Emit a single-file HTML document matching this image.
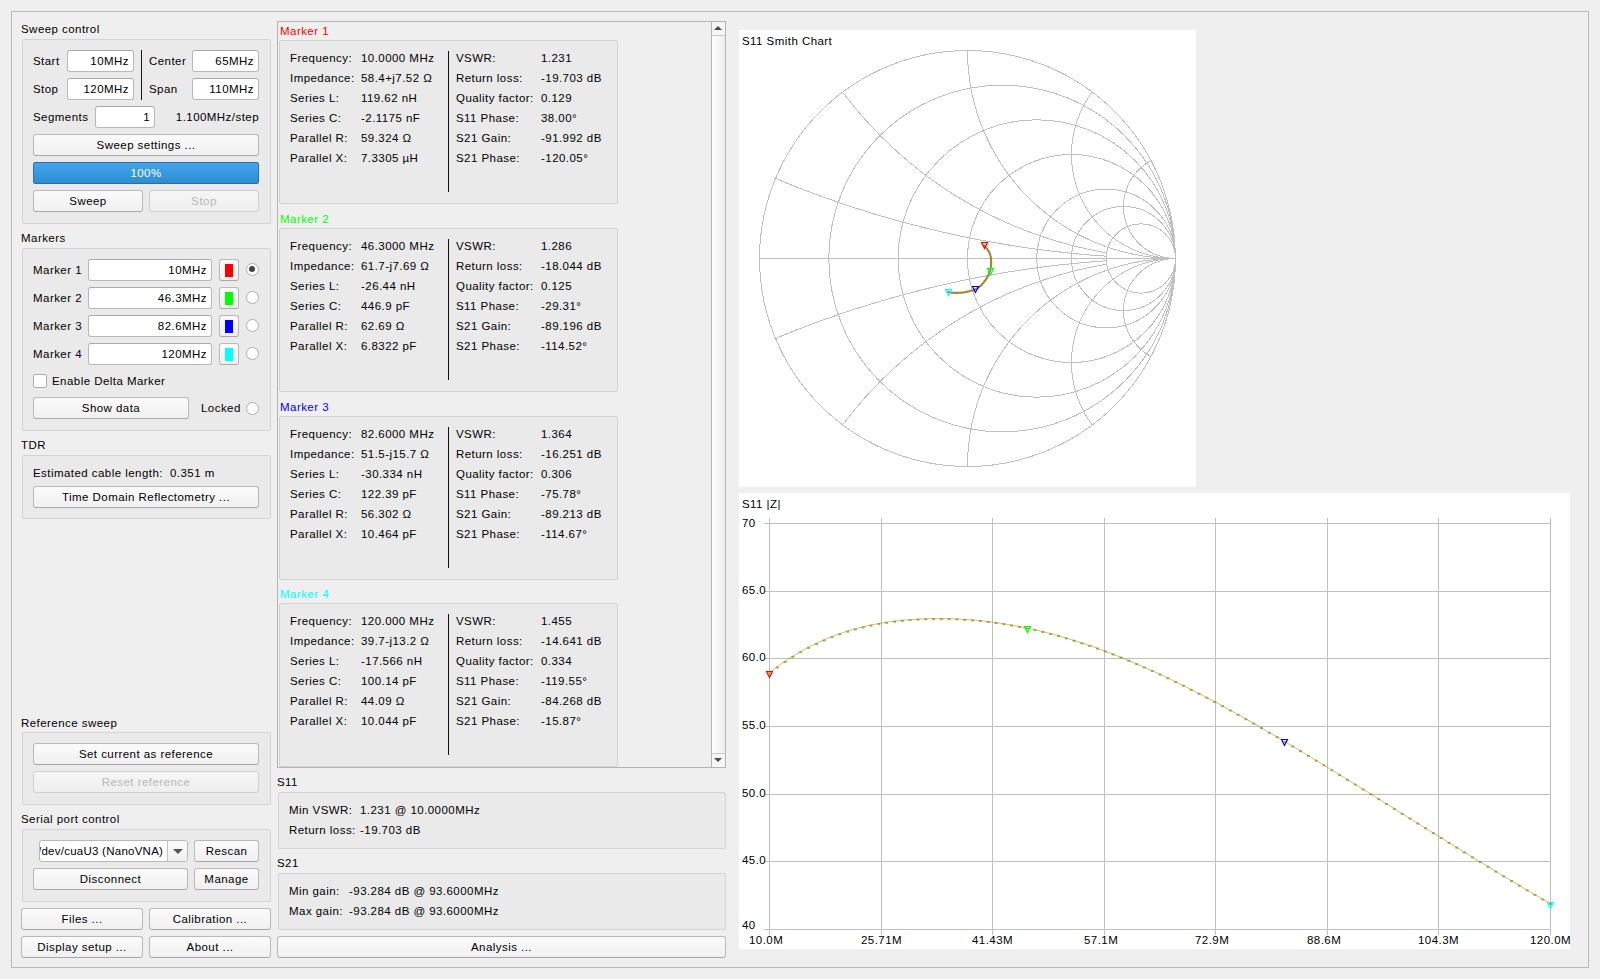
<!DOCTYPE html>
<html><head><meta charset="utf-8"><title>NanoVNA-Saver</title>
<style>
html,body{margin:0;padding:0;}
body{width:1600px;height:979px;overflow:hidden;background:#efefef;position:relative;font-family:"Liberation Sans",sans-serif;font-size:11.5px;color:#000;letter-spacing:0.45px;}
div{position:absolute;box-sizing:border-box;}
.t{white-space:pre;line-height:14px;}
.frame{border:1px solid #b9b9b9;}
.gb{border:1px solid #d3d3d3;border-radius:2px;background:#eaeaea;}
.le{background:#fff;border:1px solid #b8b8b8;border-top-color:#a9a9a9;border-radius:3px;text-align:right;padding-right:4px;white-space:nowrap;}
.btn{border:1px solid #b9b9b9;border-bottom-color:#a8a8a8;border-radius:3px;background:linear-gradient(#fbfbfb,#f0f0f0);text-align:center;white-space:nowrap;}
.btn.dis{color:#b8b8b8;border-color:#cfcfcf;background:linear-gradient(#f6f6f6,#eeeeee);}
.rad{width:13px;height:13px;border-radius:50%;border:1px solid #adadad;background:#fff;}
.dot{width:6px;height:6px;border-radius:50%;background:#434343;}
.mb{border:1px solid #d3d3d3;border-radius:2px;background:#eaeaea;}
svg{position:absolute;left:0;top:0;}
</style></head><body>

<div class="frame" style="left:11px;top:11px;width:1578px;height:957px"></div>
<div class="t " style="left:21px;top:22px;">Sweep control</div>
<div class="gb" style="left:22px;top:39px;width:249px;height:185px"></div>
<div class="t " style="left:33px;top:54px;">Start</div>
<div class="t " style="left:33px;top:82px;">Stop</div>
<div class="t " style="left:149px;top:54px;">Center</div>
<div class="t " style="left:149px;top:82px;">Span</div>
<div class="t " style="left:33px;top:110px;">Segments</div>
<div class="le" style="left:67px;top:50px;width:67px;height:22px;line-height:20px">10MHz</div>
<div class="le" style="left:67px;top:78px;width:67px;height:22px;line-height:20px">120MHz</div>
<div class="le" style="left:192px;top:50px;width:67px;height:22px;line-height:20px">65MHz</div>
<div class="le" style="left:192px;top:78px;width:67px;height:22px;line-height:20px">110MHz</div>
<div class="le" style="left:95px;top:106px;width:60px;height:22px;line-height:20px">1</div>
<div class="t " style="right:1341px;top:110px;">1.100MHz/step</div>
<div style="left:141px;top:50px;width:1px;height:50px;background:#1a1a1a"></div>
<div class="btn" style="left:33px;top:134px;width:226px;height:22px;line-height:20px">Sweep settings ...</div>
<div style="left:33px;top:162px;width:226px;height:22px;border:1px solid #2a6fa8;border-radius:2px;background:linear-gradient(#43a6ea,#2f8cd2);color:#fff;text-align:center;line-height:20px">100%</div>
<div class="btn" style="left:33px;top:190px;width:110px;height:22px;line-height:20px">Sweep</div>
<div class="btn dis" style="left:149px;top:190px;width:110px;height:22px;line-height:20px">Stop</div>
<div class="t " style="left:21px;top:231px;">Markers</div>
<div class="gb" style="left:22px;top:248px;width:249px;height:183px"></div>
<div class="t " style="left:33px;top:263px;">Marker 1</div>
<div class="le" style="left:88px;top:259px;width:124px;height:22px;line-height:20px">10MHz</div>
<div class="btn" style="left:219px;top:259px;width:20px;height:22px"></div>
<div style="left:225px;top:264px;width:8px;height:13px;background:#ff0000"></div>
<div class="rad" style="left:245.5px;top:262.5px"></div>
<div class="dot" style="left:249px;top:266px"></div>
<div class="t " style="left:33px;top:291px;">Marker 2</div>
<div class="le" style="left:88px;top:287px;width:124px;height:22px;line-height:20px">46.3MHz</div>
<div class="btn" style="left:219px;top:287px;width:20px;height:22px"></div>
<div style="left:225px;top:292px;width:8px;height:13px;background:#00ff00"></div>
<div class="rad" style="left:245.5px;top:290.5px"></div>
<div class="t " style="left:33px;top:319px;">Marker 3</div>
<div class="le" style="left:88px;top:315px;width:124px;height:22px;line-height:20px">82.6MHz</div>
<div class="btn" style="left:219px;top:315px;width:20px;height:22px"></div>
<div style="left:225px;top:320px;width:8px;height:13px;background:#0000ff"></div>
<div class="rad" style="left:245.5px;top:318.5px"></div>
<div class="t " style="left:33px;top:347px;">Marker 4</div>
<div class="le" style="left:88px;top:343px;width:124px;height:22px;line-height:20px">120MHz</div>
<div class="btn" style="left:219px;top:343px;width:20px;height:22px"></div>
<div style="left:225px;top:348px;width:8px;height:13px;background:#00ffff"></div>
<div class="rad" style="left:245.5px;top:346.5px"></div>
<div style="left:33px;top:374px;width:14px;height:14px;border:1px solid #adadad;border-radius:2px;background:#fff"></div>
<div class="t " style="left:52px;top:374px;">Enable Delta Marker</div>
<div class="btn" style="left:33px;top:397px;width:156px;height:22px;line-height:20px">Show data</div>
<div class="t " style="left:201px;top:401px;">Locked</div>
<div class="rad" style="left:245.5px;top:401.5px"></div>
<div class="t " style="left:21px;top:438px;">TDR</div>
<div class="gb" style="left:22px;top:455px;width:249px;height:64px"></div>
<div class="t " style="left:33px;top:466px;">Estimated cable length:</div>
<div class="t " style="left:170px;top:466px;">0.351 m</div>
<div class="btn" style="left:33px;top:486px;width:226px;height:22px;line-height:20px">Time Domain Reflectometry ...</div>
<div class="t " style="left:21px;top:716px;">Reference sweep</div>
<div class="gb" style="left:22px;top:732px;width:249px;height:73px"></div>
<div class="btn" style="left:33px;top:743px;width:226px;height:22px;line-height:20px">Set current as reference</div>
<div class="btn dis" style="left:33px;top:771px;width:226px;height:22px;line-height:20px">Reset reference</div>
<div class="t " style="left:21px;top:812px;">Serial port control</div>
<div class="gb" style="left:22px;top:829px;width:249px;height:73px"></div>
<div style="left:39px;top:840px;width:149px;height:22px;border:1px solid #b9b9b9;border-radius:3px;background:#fff;overflow:hidden"><div class="t" style="left:-2px;top:3px;letter-spacing:0.25px">/dev/cuaU3 (NanoVNA)</div><div style="left:127px;top:0;width:21px;height:20px;border-left:1px solid #c4c4c4;background:linear-gradient(#fbfbfb,#f0f0f0)"></div><div style="left:133px;top:8px;width:0;height:0;border-left:5px solid transparent;border-right:5px solid transparent;border-top:5px solid #555"></div></div>
<div class="btn" style="left:194px;top:840px;width:65px;height:22px;line-height:20px">Rescan</div>
<div class="btn" style="left:33px;top:868px;width:155px;height:22px;line-height:20px">Disconnect</div>
<div class="btn" style="left:194px;top:868px;width:65px;height:22px;line-height:20px">Manage</div>
<div class="btn" style="left:21px;top:908px;width:122px;height:22px;line-height:20px">Files ...</div>
<div class="btn" style="left:149px;top:908px;width:122px;height:22px;line-height:20px">Calibration ...</div>
<div class="btn" style="left:21px;top:936px;width:122px;height:22px;line-height:20px">Display setup ...</div>
<div class="btn" style="left:149px;top:936px;width:122px;height:22px;line-height:20px">About ...</div>
<div style="left:277px;top:21px;width:449px;height:747px;border:1px solid #b4b4b4;overflow:hidden">
<div class="t" style="left:2px;top:2px;color:#ff0000;">Marker 1</div>
<div class="mb" style="left:1px;top:18px;width:339px;height:164px"></div>
<div class="t" style="left:12px;top:29px;">Frequency:</div>
<div class="t" style="left:83px;top:29px;">10.0000 MHz</div>
<div class="t" style="left:178px;top:29px;">VSWR:</div>
<div class="t" style="left:263px;top:29px;">1.231</div>
<div class="t" style="left:12px;top:49px;">Impedance:</div>
<div class="t" style="left:83px;top:49px;">58.4+j7.52 Ω</div>
<div class="t" style="left:178px;top:49px;">Return loss:</div>
<div class="t" style="left:263px;top:49px;">-19.703 dB</div>
<div class="t" style="left:12px;top:69px;">Series L:</div>
<div class="t" style="left:83px;top:69px;">119.62 nH</div>
<div class="t" style="left:178px;top:69px;">Quality factor:</div>
<div class="t" style="left:263px;top:69px;">0.129</div>
<div class="t" style="left:12px;top:89px;">Series C:</div>
<div class="t" style="left:83px;top:89px;">-2.1175 nF</div>
<div class="t" style="left:178px;top:89px;">S11 Phase:</div>
<div class="t" style="left:263px;top:89px;">38.00°</div>
<div class="t" style="left:12px;top:109px;">Parallel R:</div>
<div class="t" style="left:83px;top:109px;">59.324 Ω</div>
<div class="t" style="left:178px;top:109px;">S21 Gain:</div>
<div class="t" style="left:263px;top:109px;">-91.992 dB</div>
<div class="t" style="left:12px;top:129px;">Parallel X:</div>
<div class="t" style="left:83px;top:129px;">7.3305 µH</div>
<div class="t" style="left:178px;top:129px;">S21 Phase:</div>
<div class="t" style="left:263px;top:129px;">-120.05°</div>
<div style="left:170px;top:29px;width:1px;height:141px;background:#111"></div>
<div class="t" style="left:2px;top:190px;color:#00ff00;">Marker 2</div>
<div class="mb" style="left:1px;top:206px;width:339px;height:164px"></div>
<div class="t" style="left:12px;top:217px;">Frequency:</div>
<div class="t" style="left:83px;top:217px;">46.3000 MHz</div>
<div class="t" style="left:178px;top:217px;">VSWR:</div>
<div class="t" style="left:263px;top:217px;">1.286</div>
<div class="t" style="left:12px;top:237px;">Impedance:</div>
<div class="t" style="left:83px;top:237px;">61.7-j7.69 Ω</div>
<div class="t" style="left:178px;top:237px;">Return loss:</div>
<div class="t" style="left:263px;top:237px;">-18.044 dB</div>
<div class="t" style="left:12px;top:257px;">Series L:</div>
<div class="t" style="left:83px;top:257px;">-26.44 nH</div>
<div class="t" style="left:178px;top:257px;">Quality factor:</div>
<div class="t" style="left:263px;top:257px;">0.125</div>
<div class="t" style="left:12px;top:277px;">Series C:</div>
<div class="t" style="left:83px;top:277px;">446.9 pF</div>
<div class="t" style="left:178px;top:277px;">S11 Phase:</div>
<div class="t" style="left:263px;top:277px;">-29.31°</div>
<div class="t" style="left:12px;top:297px;">Parallel R:</div>
<div class="t" style="left:83px;top:297px;">62.69 Ω</div>
<div class="t" style="left:178px;top:297px;">S21 Gain:</div>
<div class="t" style="left:263px;top:297px;">-89.196 dB</div>
<div class="t" style="left:12px;top:317px;">Parallel X:</div>
<div class="t" style="left:83px;top:317px;">6.8322 pF</div>
<div class="t" style="left:178px;top:317px;">S21 Phase:</div>
<div class="t" style="left:263px;top:317px;">-114.52°</div>
<div style="left:170px;top:217px;width:1px;height:141px;background:#111"></div>
<div class="t" style="left:2px;top:378px;color:#0000ff;">Marker 3</div>
<div class="mb" style="left:1px;top:394px;width:339px;height:164px"></div>
<div class="t" style="left:12px;top:405px;">Frequency:</div>
<div class="t" style="left:83px;top:405px;">82.6000 MHz</div>
<div class="t" style="left:178px;top:405px;">VSWR:</div>
<div class="t" style="left:263px;top:405px;">1.364</div>
<div class="t" style="left:12px;top:425px;">Impedance:</div>
<div class="t" style="left:83px;top:425px;">51.5-j15.7 Ω</div>
<div class="t" style="left:178px;top:425px;">Return loss:</div>
<div class="t" style="left:263px;top:425px;">-16.251 dB</div>
<div class="t" style="left:12px;top:445px;">Series L:</div>
<div class="t" style="left:83px;top:445px;">-30.334 nH</div>
<div class="t" style="left:178px;top:445px;">Quality factor:</div>
<div class="t" style="left:263px;top:445px;">0.306</div>
<div class="t" style="left:12px;top:465px;">Series C:</div>
<div class="t" style="left:83px;top:465px;">122.39 pF</div>
<div class="t" style="left:178px;top:465px;">S11 Phase:</div>
<div class="t" style="left:263px;top:465px;">-75.78°</div>
<div class="t" style="left:12px;top:485px;">Parallel R:</div>
<div class="t" style="left:83px;top:485px;">56.302 Ω</div>
<div class="t" style="left:178px;top:485px;">S21 Gain:</div>
<div class="t" style="left:263px;top:485px;">-89.213 dB</div>
<div class="t" style="left:12px;top:505px;">Parallel X:</div>
<div class="t" style="left:83px;top:505px;">10.464 pF</div>
<div class="t" style="left:178px;top:505px;">S21 Phase:</div>
<div class="t" style="left:263px;top:505px;">-114.67°</div>
<div style="left:170px;top:405px;width:1px;height:141px;background:#111"></div>
<div class="t" style="left:2px;top:565px;color:#00ffff;">Marker 4</div>
<div class="mb" style="left:1px;top:581px;width:339px;height:164px"></div>
<div class="t" style="left:12px;top:592px;">Frequency:</div>
<div class="t" style="left:83px;top:592px;">120.000 MHz</div>
<div class="t" style="left:178px;top:592px;">VSWR:</div>
<div class="t" style="left:263px;top:592px;">1.455</div>
<div class="t" style="left:12px;top:612px;">Impedance:</div>
<div class="t" style="left:83px;top:612px;">39.7-j13.2 Ω</div>
<div class="t" style="left:178px;top:612px;">Return loss:</div>
<div class="t" style="left:263px;top:612px;">-14.641 dB</div>
<div class="t" style="left:12px;top:632px;">Series L:</div>
<div class="t" style="left:83px;top:632px;">-17.566 nH</div>
<div class="t" style="left:178px;top:632px;">Quality factor:</div>
<div class="t" style="left:263px;top:632px;">0.334</div>
<div class="t" style="left:12px;top:652px;">Series C:</div>
<div class="t" style="left:83px;top:652px;">100.14 pF</div>
<div class="t" style="left:178px;top:652px;">S11 Phase:</div>
<div class="t" style="left:263px;top:652px;">-119.55°</div>
<div class="t" style="left:12px;top:672px;">Parallel R:</div>
<div class="t" style="left:83px;top:672px;">44.09 Ω</div>
<div class="t" style="left:178px;top:672px;">S21 Gain:</div>
<div class="t" style="left:263px;top:672px;">-84.268 dB</div>
<div class="t" style="left:12px;top:692px;">Parallel X:</div>
<div class="t" style="left:83px;top:692px;">10.044 pF</div>
<div class="t" style="left:178px;top:692px;">S21 Phase:</div>
<div class="t" style="left:263px;top:692px;">-15.87°</div>
<div style="left:170px;top:592px;width:1px;height:141px;background:#111"></div>
<div style="left:433px;top:0px;width:15px;height:745px;border-left:1px solid #b4b4b4;background:linear-gradient(90deg,#fdfdfd,#ededed)"></div>
<div style="left:433px;top:0px;width:15px;height:14px;border-left:1px solid #b4b4b4;border-bottom:1px solid #c8c8c8;background:#f6f6f6"></div>
<div style="left:436px;top:4px;width:0;height:0;border-left:4px solid transparent;border-right:4px solid transparent;border-bottom:4px solid #4a4a4a"></div>
<div style="left:433px;top:731px;width:15px;height:15px;border-left:1px solid #b4b4b4;border-top:1px solid #c8c8c8;background:#f6f6f6"></div>
<div style="left:436px;top:736px;width:0;height:0;border-left:4px solid transparent;border-right:4px solid transparent;border-top:4px solid #4a4a4a"></div>
</div>
<div class="t " style="left:277px;top:775px;">S11</div>
<div class="gb" style="left:278px;top:792px;width:448px;height:57px"></div>
<div class="t " style="left:289px;top:803px;">Min VSWR:</div>
<div class="t " style="left:360px;top:803px;">1.231 @ 10.0000MHz</div>
<div class="t " style="left:289px;top:823px;">Return loss:</div>
<div class="t " style="left:360px;top:823px;">-19.703 dB</div>
<div class="t " style="left:277px;top:856px;">S21</div>
<div class="gb" style="left:278px;top:873px;width:448px;height:57px"></div>
<div class="t " style="left:289px;top:884px;">Min gain:</div>
<div class="t " style="left:349px;top:884px;">-93.284 dB @ 93.6000MHz</div>
<div class="t " style="left:289px;top:904px;">Max gain:</div>
<div class="t " style="left:349px;top:904px;">-93.284 dB @ 93.6000MHz</div>
<div class="btn" style="left:277px;top:936px;width:449px;height:22px;line-height:20px">Analysis ...</div>
<div style="left:739px;top:30px;width:457px;height:457px;background:#fff"></div>
<div class="t " style="left:742px;top:34px;">S11 Smith Chart</div>
<div style="left:739px;top:493px;width:831px;height:456px;background:#fff"></div>
<div class="t " style="left:742px;top:497px;">S11 |Z|</div>
<svg width="1600" height="979" viewBox="0 0 1600 979" style="left:0;top:0">
<g fill="none" stroke="#c0c0c0" stroke-width="1" shape-rendering="crispEdges"><circle cx="967.5" cy="258.5" r="208.0"/><line x1="759.5" y1="258.5" x2="1175.5" y2="258.5"/><circle cx="1002.17" cy="258.5" r="173.33"/><circle cx="1036.83" cy="258.5" r="138.67"/><circle cx="1071.50" cy="258.5" r="104.00"/><circle cx="1106.17" cy="258.5" r="69.33"/><circle cx="1123.50" cy="258.5" r="52.00"/><circle cx="1140.83" cy="258.5" r="34.67"/><polyline points="1175.50,258.50 1172.44,258.59 1169.38,258.86 1166.35,259.31 1163.35,259.94 1160.39,260.74 1157.49,261.72 1154.64,262.87 1151.87,264.18 1149.19,265.65 1146.59,267.28 1144.09,269.06 1141.71,270.98 1139.44,273.04 1137.29,275.23 1135.28,277.54 1133.41,279.97 1131.68,282.50 1130.11,285.13 1128.69,287.85 1127.44,290.65 1126.35,293.51 1125.44,296.44 1124.70,299.41 1124.13,302.43 1123.74,305.47 1123.54,308.52 1123.51,311.59 1123.67,314.65 1124.00,317.70 1124.51,320.72 1125.20,323.71 1126.07,326.65 1127.11,329.53 1128.31,332.35 1129.68,335.09 1131.21,337.75 1132.89,340.31 1134.72,342.77 1136.69,345.11 1138.80,347.34 1141.04,349.44 1143.39,351.40 1145.86,353.22 1148.42,354.90 1151.09,356.41"/><polyline points="1175.50,258.50 1172.44,258.41 1169.38,258.14 1166.35,257.69 1163.35,257.06 1160.39,256.26 1157.49,255.28 1154.64,254.13 1151.87,252.82 1149.19,251.35 1146.59,249.72 1144.09,247.94 1141.71,246.02 1139.44,243.96 1137.29,241.77 1135.28,239.46 1133.41,237.03 1131.68,234.50 1130.11,231.87 1128.69,229.15 1127.44,226.35 1126.35,223.49 1125.44,220.56 1124.70,217.59 1124.13,214.57 1123.74,211.53 1123.54,208.48 1123.51,205.41 1123.67,202.35 1124.00,199.30 1124.51,196.28 1125.20,193.29 1126.07,190.35 1127.11,187.47 1128.31,184.65 1129.68,181.91 1131.21,179.25 1132.89,176.69 1134.72,174.23 1136.69,171.89 1138.80,169.66 1141.04,167.56 1143.39,165.60 1145.86,163.78 1148.42,162.10 1151.09,160.59"/><polyline points="1175.50,258.50 1172.47,258.54 1169.44,258.68 1166.41,258.90 1163.39,259.21 1160.39,259.60 1157.39,260.09 1154.41,260.66 1151.45,261.32 1148.51,262.06 1145.60,262.89 1142.70,263.81 1139.84,264.80 1137.01,265.89 1134.21,267.05 1131.44,268.29 1128.71,269.62 1126.02,271.02 1123.38,272.51 1120.77,274.06 1118.22,275.70 1115.71,277.40 1113.26,279.18 1110.85,281.03 1108.50,282.95 1106.21,284.94 1103.98,287.00 1101.81,289.11 1099.70,291.29 1097.66,293.53 1095.68,295.83 1093.77,298.19 1091.93,300.60 1090.16,303.06 1088.46,305.58 1086.84,308.14 1085.29,310.75 1083.82,313.40 1082.43,316.10 1081.11,318.83 1079.88,321.60 1078.73,324.41 1077.66,327.24 1076.67,330.11 1075.77,333.01 1074.95,335.93 1074.22,338.87 1073.57,341.84 1073.01,344.82 1072.54,347.81 1072.16,350.82 1071.86,353.84 1071.65,356.87 1071.53,359.90 1071.50,362.93 1071.56,365.96 1071.70,368.99 1071.94,372.02 1072.26,375.03 1072.67,378.04 1073.16,381.03 1073.75,384.01 1074.42,386.96 1075.17,389.90 1076.02,392.82 1076.94,395.70 1077.95,398.56 1079.05,401.39 1080.22,404.19 1081.48,406.95 1082.81,409.67 1084.23,412.36 1085.72,415.00 1087.29,417.59 1088.93,420.14 1090.65,422.64 1092.44,425.09"/><polyline points="1175.50,258.50 1172.47,258.46 1169.44,258.32 1166.41,258.10 1163.39,257.79 1160.39,257.40 1157.39,256.91 1154.41,256.34 1151.45,255.68 1148.51,254.94 1145.60,254.11 1142.70,253.19 1139.84,252.20 1137.01,251.11 1134.21,249.95 1131.44,248.71 1128.71,247.38 1126.02,245.98 1123.38,244.49 1120.77,242.94 1118.22,241.30 1115.71,239.60 1113.26,237.82 1110.85,235.97 1108.50,234.05 1106.21,232.06 1103.98,230.00 1101.81,227.89 1099.70,225.71 1097.66,223.47 1095.68,221.17 1093.77,218.81 1091.93,216.40 1090.16,213.94 1088.46,211.42 1086.84,208.86 1085.29,206.25 1083.82,203.60 1082.43,200.90 1081.11,198.17 1079.88,195.40 1078.73,192.59 1077.66,189.76 1076.67,186.89 1075.77,183.99 1074.95,181.07 1074.22,178.13 1073.57,175.16 1073.01,172.18 1072.54,169.19 1072.16,166.18 1071.86,163.16 1071.65,160.13 1071.53,157.10 1071.50,154.07 1071.56,151.04 1071.70,148.01 1071.94,144.98 1072.26,141.97 1072.67,138.96 1073.16,135.97 1073.75,132.99 1074.42,130.04 1075.17,127.10 1076.02,124.18 1076.94,121.30 1077.95,118.44 1079.05,115.61 1080.22,112.81 1081.48,110.05 1082.81,107.33 1084.23,104.64 1085.72,102.00 1087.29,99.41 1088.93,96.86 1090.65,94.36 1092.44,91.91"/><polyline points="1175.50,258.50 1172.47,258.52 1169.45,258.59 1166.43,258.70 1163.41,258.85 1160.39,259.05 1157.37,259.29 1154.36,259.58 1151.35,259.91 1148.35,260.28 1145.35,260.70 1142.36,261.16 1139.38,261.66 1136.41,262.21 1133.44,262.80 1130.48,263.43 1127.53,264.11 1124.59,264.83 1121.67,265.59 1118.75,266.39 1115.84,267.24 1112.95,268.13 1110.07,269.06 1107.21,270.03 1104.36,271.04 1101.52,272.10 1098.71,273.20 1095.90,274.33 1093.12,275.51 1090.35,276.73 1087.60,277.99 1084.86,279.29 1082.15,280.62 1079.46,282.00 1076.78,283.42 1074.13,284.87 1071.50,286.37 1068.89,287.90 1066.30,289.47 1063.74,291.07 1061.20,292.72 1058.69,294.40 1056.20,296.12 1053.73,297.87 1051.29,299.66 1048.88,301.48 1046.49,303.34 1044.13,305.24 1041.80,307.16 1039.50,309.12 1037.22,311.12 1034.98,313.15 1032.76,315.21 1030.58,317.30 1028.42,319.42 1026.30,321.58 1024.21,323.76 1022.15,325.98 1020.12,328.22 1018.12,330.50 1016.16,332.80 1014.24,335.13 1012.34,337.49 1010.48,339.88 1008.66,342.29 1006.87,344.73 1005.12,347.20 1003.40,349.69 1001.72,352.20 1000.07,354.74 998.47,357.30 996.90,359.89 995.37,362.50 993.87,365.13 992.42,367.78 991.00,370.46 989.62,373.15 988.29,375.86 986.99,378.60 985.73,381.35 984.51,384.12 983.33,386.90 982.20,389.71 981.10,392.52 980.04,395.36 979.03,398.21 978.06,401.07 977.13,403.95 976.24,406.84 975.39,409.75 974.59,412.67 973.83,415.59 973.11,418.53 972.43,421.48 971.80,424.44 971.21,427.41 970.66,430.38 970.16,433.36 969.70,436.35 969.28,439.35 968.91,442.35 968.58,445.36 968.29,448.37 968.05,451.39 967.85,454.41 967.70,457.43 967.59,460.45 967.52,463.47 967.50,466.50"/><polyline points="1175.50,258.50 1172.47,258.48 1169.45,258.41 1166.43,258.30 1163.41,258.15 1160.39,257.95 1157.37,257.71 1154.36,257.42 1151.35,257.09 1148.35,256.72 1145.35,256.30 1142.36,255.84 1139.38,255.34 1136.41,254.79 1133.44,254.20 1130.48,253.57 1127.53,252.89 1124.59,252.17 1121.67,251.41 1118.75,250.61 1115.84,249.76 1112.95,248.87 1110.07,247.94 1107.21,246.97 1104.36,245.96 1101.52,244.90 1098.71,243.80 1095.90,242.67 1093.12,241.49 1090.35,240.27 1087.60,239.01 1084.86,237.71 1082.15,236.38 1079.46,235.00 1076.78,233.58 1074.13,232.13 1071.50,230.63 1068.89,229.10 1066.30,227.53 1063.74,225.93 1061.20,224.28 1058.69,222.60 1056.20,220.88 1053.73,219.13 1051.29,217.34 1048.88,215.52 1046.49,213.66 1044.13,211.76 1041.80,209.84 1039.50,207.88 1037.22,205.88 1034.98,203.85 1032.76,201.79 1030.58,199.70 1028.42,197.58 1026.30,195.42 1024.21,193.24 1022.15,191.02 1020.12,188.78 1018.12,186.50 1016.16,184.20 1014.24,181.87 1012.34,179.51 1010.48,177.12 1008.66,174.71 1006.87,172.27 1005.12,169.80 1003.40,167.31 1001.72,164.80 1000.07,162.26 998.47,159.70 996.90,157.11 995.37,154.50 993.87,151.87 992.42,149.22 991.00,146.54 989.62,143.85 988.29,141.14 986.99,138.40 985.73,135.65 984.51,132.88 983.33,130.10 982.20,127.29 981.10,124.48 980.04,121.64 979.03,118.79 978.06,115.93 977.13,113.05 976.24,110.16 975.39,107.25 974.59,104.33 973.83,101.41 973.11,98.47 972.43,95.52 971.80,92.56 971.21,89.59 970.66,86.62 970.16,83.64 969.70,80.65 969.28,77.65 968.91,74.65 968.58,71.64 968.29,68.63 968.05,65.61 967.85,62.59 967.70,59.57 967.59,56.55 967.52,53.53 967.50,50.50"/><polyline points="1106.84,264.21 1103.88,264.71 1100.91,265.24 1097.96,265.79 1095.00,266.36 1092.05,266.96 1089.11,267.57 1086.17,268.20 1083.23,268.86 1080.30,269.54 1077.38,270.24 1074.46,270.96 1071.54,271.70 1068.63,272.46 1065.73,273.24 1062.83,274.05 1059.94,274.87 1057.05,275.72 1054.17,276.59 1051.30,277.47 1048.43,278.38 1045.57,279.31 1042.71,280.26 1039.87,281.23 1037.03,282.22 1034.19,283.23 1031.37,284.27 1028.55,285.32 1025.74,286.39 1022.94,287.48 1020.14,288.60 1017.36,289.73 1014.58,290.88 1011.81,292.06 1009.05,293.25 1006.30,294.47 1003.55,295.70 1000.82,296.95 998.09,298.22 995.38,299.52 992.67,300.83 989.97,302.16 987.29,303.51 984.61,304.88 981.94,306.27 979.28,307.68 976.64,309.11 974.00,310.56 971.37,312.02 968.76,313.51 966.15,315.01 963.56,316.54 960.98,318.08 958.41,319.64 955.85,321.22 953.30,322.82 950.76,324.43 948.23,326.07 945.72,327.72 943.22,329.39 940.73,331.08 938.25,332.78 935.79,334.51 933.34,336.25 930.90,338.01 928.47,339.79 926.06,341.58 923.66,343.39 921.27,345.22 918.89,347.07 916.53,348.94 914.19,350.82 911.85,352.71 909.53,354.63 907.23,356.56 904.94,358.51 902.66,360.47 900.39,362.45 898.15,364.45 895.91,366.46 893.69,368.49 891.49,370.54 889.30,372.60 887.12,374.68 884.96,376.77 882.81,378.88 880.68,381.00 878.57,383.14 876.47,385.30 874.39,387.47 872.32,389.65 870.27,391.85 868.23,394.07 866.21,396.30 864.21,398.54 862.22,400.80 860.25,403.07 858.30,405.36 856.36,407.66 854.44,409.97 852.53,412.30 850.65,414.64 848.78,417.00 846.92,419.37 845.09,421.75 843.27,424.14"/><polyline points="1106.84,252.79 1103.88,252.29 1100.91,251.76 1097.96,251.21 1095.00,250.64 1092.05,250.04 1089.11,249.43 1086.17,248.80 1083.23,248.14 1080.30,247.46 1077.38,246.76 1074.46,246.04 1071.54,245.30 1068.63,244.54 1065.73,243.76 1062.83,242.95 1059.94,242.13 1057.05,241.28 1054.17,240.41 1051.30,239.53 1048.43,238.62 1045.57,237.69 1042.71,236.74 1039.87,235.77 1037.03,234.78 1034.19,233.77 1031.37,232.73 1028.55,231.68 1025.74,230.61 1022.94,229.52 1020.14,228.40 1017.36,227.27 1014.58,226.12 1011.81,224.94 1009.05,223.75 1006.30,222.53 1003.55,221.30 1000.82,220.05 998.09,218.78 995.38,217.48 992.67,216.17 989.97,214.84 987.29,213.49 984.61,212.12 981.94,210.73 979.28,209.32 976.64,207.89 974.00,206.44 971.37,204.98 968.76,203.49 966.15,201.99 963.56,200.46 960.98,198.92 958.41,197.36 955.85,195.78 953.30,194.18 950.76,192.57 948.23,190.93 945.72,189.28 943.22,187.61 940.73,185.92 938.25,184.22 935.79,182.49 933.34,180.75 930.90,178.99 928.47,177.21 926.06,175.42 923.66,173.61 921.27,171.78 918.89,169.93 916.53,168.06 914.19,166.18 911.85,164.29 909.53,162.37 907.23,160.44 904.94,158.49 902.66,156.53 900.39,154.55 898.15,152.55 895.91,150.54 893.69,148.51 891.49,146.46 889.30,144.40 887.12,142.32 884.96,140.23 882.81,138.12 880.68,136.00 878.57,133.86 876.47,131.70 874.39,129.53 872.32,127.35 870.27,125.15 868.23,122.93 866.21,120.70 864.21,118.46 862.22,116.20 860.25,113.93 858.30,111.64 856.36,109.34 854.44,107.03 852.53,104.70 850.65,102.36 848.78,100.00 846.92,97.63 845.09,95.25 843.27,92.86"/><polyline points="1105.67,260.85 1102.68,261.05 1099.68,261.27 1096.69,261.49 1093.70,261.72 1090.70,261.96 1087.71,262.21 1084.72,262.47 1081.73,262.74 1078.74,263.01 1075.76,263.29 1072.77,263.59 1069.78,263.89 1066.80,264.20 1063.81,264.51 1060.83,264.84 1057.85,265.18 1054.87,265.52 1051.89,265.87 1048.91,266.23 1045.93,266.60 1042.95,266.98 1039.97,267.37 1037.00,267.76 1034.02,268.17 1031.05,268.58 1028.08,269.00 1025.11,269.43 1022.14,269.87 1019.17,270.32 1016.21,270.77 1013.24,271.24 1010.28,271.71 1007.31,272.19 1004.35,272.68 1001.39,273.18 998.44,273.68 995.48,274.20 992.52,274.72 989.57,275.26 986.62,275.80 983.67,276.35 980.72,276.90 977.77,277.47 974.82,278.04 971.88,278.63 968.94,279.22 966.00,279.82 963.06,280.43 960.12,281.05 957.19,281.67 954.25,282.31 951.32,282.95 948.39,283.60 945.46,284.26 942.54,284.93 939.61,285.60 936.69,286.29 933.77,286.98 930.85,287.68 927.94,288.40 925.02,289.11 922.11,289.84 919.20,290.58 916.29,291.32 913.39,292.07 910.48,292.83 907.58,293.60 904.68,294.38 901.79,295.17 898.89,295.96 896.00,296.76 893.11,297.57 890.22,298.39 887.34,299.22 884.45,300.05 881.57,300.90 878.70,301.75 875.82,302.61 872.95,303.48 870.08,304.36 867.21,305.24 864.35,306.14 861.48,307.04 858.62,307.95 855.77,308.87 852.91,309.80 850.06,310.73 847.21,311.67 844.36,312.63 841.52,313.59 838.68,314.55 835.84,315.53 833.01,316.51 830.17,317.51 827.34,318.51 824.52,319.52 821.69,320.53 818.87,321.56 816.05,322.59 813.24,323.63 810.43,324.68 807.62,325.74 804.81,326.81 802.01,327.88 799.21,328.96 796.41,330.05 793.62,331.15 790.83,332.26 788.04,333.37 785.26,334.49 782.48,335.62 779.70,336.76 776.93,337.91 774.16,339.06"/><polyline points="1105.67,256.15 1102.68,255.95 1099.68,255.73 1096.69,255.51 1093.70,255.28 1090.70,255.04 1087.71,254.79 1084.72,254.53 1081.73,254.26 1078.74,253.99 1075.76,253.71 1072.77,253.41 1069.78,253.11 1066.80,252.80 1063.81,252.49 1060.83,252.16 1057.85,251.82 1054.87,251.48 1051.89,251.13 1048.91,250.77 1045.93,250.40 1042.95,250.02 1039.97,249.63 1037.00,249.24 1034.02,248.83 1031.05,248.42 1028.08,248.00 1025.11,247.57 1022.14,247.13 1019.17,246.68 1016.21,246.23 1013.24,245.76 1010.28,245.29 1007.31,244.81 1004.35,244.32 1001.39,243.82 998.44,243.32 995.48,242.80 992.52,242.28 989.57,241.74 986.62,241.20 983.67,240.65 980.72,240.10 977.77,239.53 974.82,238.96 971.88,238.37 968.94,237.78 966.00,237.18 963.06,236.57 960.12,235.95 957.19,235.33 954.25,234.69 951.32,234.05 948.39,233.40 945.46,232.74 942.54,232.07 939.61,231.40 936.69,230.71 933.77,230.02 930.85,229.32 927.94,228.60 925.02,227.89 922.11,227.16 919.20,226.42 916.29,225.68 913.39,224.93 910.48,224.17 907.58,223.40 904.68,222.62 901.79,221.83 898.89,221.04 896.00,220.24 893.11,219.43 890.22,218.61 887.34,217.78 884.45,216.95 881.57,216.10 878.70,215.25 875.82,214.39 872.95,213.52 870.08,212.64 867.21,211.76 864.35,210.86 861.48,209.96 858.62,209.05 855.77,208.13 852.91,207.20 850.06,206.27 847.21,205.33 844.36,204.37 841.52,203.41 838.68,202.45 835.84,201.47 833.01,200.49 830.17,199.49 827.34,198.49 824.52,197.48 821.69,196.47 818.87,195.44 816.05,194.41 813.24,193.37 810.43,192.32 807.62,191.26 804.81,190.19 802.01,189.12 799.21,188.04 796.41,186.95 793.62,185.85 790.83,184.74 788.04,183.63 785.26,182.51 782.48,181.38 779.70,180.24 776.93,179.09 774.16,177.94"/></g>
<polyline fill="none" stroke="#a08c2c" stroke-width="2.1" stroke-linejoin="round" stroke-linecap="round" points="984.0,245.3 984.4,245.7 984.9,246.3 985.5,247.0 986.1,247.8 986.8,248.6 987.4,249.4 988.0,250.2 988.5,251.0 988.9,251.7 989.3,252.5 989.6,253.2 989.9,254.0 990.2,254.7 990.4,255.5 990.6,256.2 990.8,257.0 990.9,257.8 991.0,258.5 991.1,259.3 991.1,260.0 991.1,260.8 991.1,261.5 991.1,262.3 991.1,263.0 991.1,263.7 991.0,264.5 991.0,265.3 990.9,266.0 990.9,266.7 990.8,267.4 990.7,268.0 990.6,268.6 990.5,269.1 990.4,269.4 990.3,269.7 990.3,269.9 990.2,270.2 990.0,270.5 989.9,270.8 989.7,271.3 989.5,271.9 989.3,272.5 989.1,273.2 988.8,273.9 988.5,274.7 988.2,275.5 987.9,276.2 987.5,277.0 987.1,277.8 986.5,278.5 986.0,279.3 985.4,280.2 984.8,280.9 984.2,281.7 983.7,282.4 983.1,283.1 982.6,283.7 982.1,284.3 981.5,284.9 981.0,285.4 980.5,285.9 980.0,286.3 979.5,286.8 979.0,287.2 978.5,287.6 978.0,287.9 977.5,288.2 977.0,288.5 976.6,288.8 976.0,289.0 975.5,289.3 974.9,289.5 974.3,289.7 973.6,290.0 972.9,290.2 972.2,290.4 971.4,290.6 970.7,290.8 969.9,291.0 969.2,291.2 968.5,291.4 967.7,291.6 967.0,291.8 966.3,291.9 965.5,292.1 964.7,292.2 963.9,292.4 963.0,292.5 962.0,292.6 961.0,292.7 959.9,292.8 958.8,292.8 957.6,292.9 956.5,292.9 955.5,292.9 954.5,292.9 953.5,292.8 952.6,292.7 951.6,292.6 950.7,292.4 949.9,292.3 949.1,292.1 948.5,292.0 948.0,291.9"/>
<path d="M984.5 248.5 L981.5 242.5 L987.5 242.5 Z" fill="none" stroke="#ff0000" stroke-width="1.2"/>
<path d="M990.5 274.5 L987.5 268.5 L993.5 268.5 Z" fill="none" stroke="#00ff00" stroke-width="1.2"/>
<path d="M975.5 292.5 L972.5 286.5 L978.5 286.5 Z" fill="none" stroke="#0000ff" stroke-width="1.2"/>
<path d="M948.5 295.5 L945.5 289.5 L951.5 289.5 Z" fill="none" stroke="#00ffff" stroke-width="1.2"/>
<g fill="none" stroke="#c0c0c0" stroke-width="1" shape-rendering="crispEdges"><line x1="764" y1="523.5" x2="1551" y2="523.5"/><line x1="764" y1="591.5" x2="1551" y2="591.5"/><line x1="764" y1="658.5" x2="1551" y2="658.5"/><line x1="764" y1="726.5" x2="1551" y2="726.5"/><line x1="764" y1="794.5" x2="1551" y2="794.5"/><line x1="764" y1="861.5" x2="1551" y2="861.5"/><line x1="764" y1="929.5" x2="1551" y2="929.5"/><line x1="769.5" y1="518" x2="769.5" y2="935"/><line x1="881.5" y1="518" x2="881.5" y2="935"/><line x1="992.5" y1="518" x2="992.5" y2="935"/><line x1="1104.5" y1="518" x2="1104.5" y2="935"/><line x1="1215.5" y1="518" x2="1215.5" y2="935"/><line x1="1327.5" y1="518" x2="1327.5" y2="935"/><line x1="1438.5" y1="518" x2="1438.5" y2="935"/><line x1="1550.5" y1="518" x2="1550.5" y2="935"/></g>
<polyline fill="none" stroke="rgba(160,140,20,0.55)" stroke-width="1" points="769.0,672.9 776.8,667.0 784.6,661.5 792.4,656.4 800.2,651.7 808.0,647.4 815.9,643.5 823.7,640.0 831.5,636.7 839.3,633.8 847.1,631.2 854.9,628.9 862.7,626.9 870.5,625.1 878.3,623.6 886.1,622.3 894.0,621.2 901.8,620.3 909.6,619.7 917.4,619.1 925.2,618.8 933.0,618.6 940.8,618.6 948.6,618.7 956.4,618.9 964.2,619.4 972.1,619.9 979.9,620.6 987.7,621.5 995.5,622.5 1003.3,623.7 1011.1,625.0 1018.9,626.4 1026.7,628.0 1034.5,629.7 1042.3,631.5 1050.2,633.5 1058.0,635.6 1065.8,637.9 1073.6,640.3 1081.4,642.8 1089.2,645.4 1097.0,648.1 1104.8,651.0 1112.6,654.0 1120.5,657.1 1128.3,660.3 1136.1,663.6 1143.9,667.0 1151.7,670.5 1159.5,674.0 1167.3,677.7 1175.1,681.5 1182.9,685.3 1190.7,689.3 1198.5,693.3 1206.4,697.3 1214.2,701.5 1222.0,705.7 1229.8,710.0 1237.6,714.3 1245.4,718.7 1253.2,723.1 1261.0,727.6 1268.8,732.2 1276.7,736.7 1284.5,741.4 1292.3,746.0 1300.1,750.7 1307.9,755.4 1315.7,760.2 1323.5,764.9 1331.3,769.7 1339.1,774.5 1346.9,779.3 1354.8,784.1 1362.6,789.0 1370.4,793.8 1378.2,798.7 1386.0,803.5 1393.8,808.4 1401.6,813.3 1409.4,818.1 1417.2,823.0 1425.0,827.8 1432.8,832.7 1440.7,837.5 1448.5,842.4 1456.3,847.2 1464.1,852.0 1471.9,856.8 1479.7,861.6 1487.5,866.3 1495.3,871.1 1503.1,875.8 1511.0,880.5 1518.8,885.2 1526.6,889.8 1534.4,894.4 1542.2,899.0 1550.0,903.5"/>
<g fill="rgba(160,140,20,0.75)"><rect x="768.0" y="672.4" width="3" height="2"/><rect x="775.8" y="666.5" width="3" height="2"/><rect x="783.6" y="661.0" width="3" height="2"/><rect x="791.4" y="655.9" width="3" height="2"/><rect x="799.2" y="651.2" width="3" height="2"/><rect x="807.0" y="646.9" width="3" height="2"/><rect x="814.9" y="643.0" width="3" height="2"/><rect x="822.7" y="639.5" width="3" height="2"/><rect x="830.5" y="636.2" width="3" height="2"/><rect x="838.3" y="633.3" width="3" height="2"/><rect x="846.1" y="630.7" width="3" height="2"/><rect x="853.9" y="628.4" width="3" height="2"/><rect x="861.7" y="626.4" width="3" height="2"/><rect x="869.5" y="624.6" width="3" height="2"/><rect x="877.3" y="623.1" width="3" height="2"/><rect x="885.1" y="621.8" width="3" height="2"/><rect x="893.0" y="620.7" width="3" height="2"/><rect x="900.8" y="619.8" width="3" height="2"/><rect x="908.6" y="619.2" width="3" height="2"/><rect x="916.4" y="618.6" width="3" height="2"/><rect x="924.2" y="618.3" width="3" height="2"/><rect x="932.0" y="618.1" width="3" height="2"/><rect x="939.8" y="618.1" width="3" height="2"/><rect x="947.6" y="618.2" width="3" height="2"/><rect x="955.4" y="618.4" width="3" height="2"/><rect x="963.2" y="618.9" width="3" height="2"/><rect x="971.1" y="619.4" width="3" height="2"/><rect x="978.9" y="620.1" width="3" height="2"/><rect x="986.7" y="621.0" width="3" height="2"/><rect x="994.5" y="622.0" width="3" height="2"/><rect x="1002.3" y="623.2" width="3" height="2"/><rect x="1010.1" y="624.5" width="3" height="2"/><rect x="1017.9" y="625.9" width="3" height="2"/><rect x="1025.7" y="627.5" width="3" height="2"/><rect x="1033.5" y="629.2" width="3" height="2"/><rect x="1041.3" y="631.0" width="3" height="2"/><rect x="1049.2" y="633.0" width="3" height="2"/><rect x="1057.0" y="635.1" width="3" height="2"/><rect x="1064.8" y="637.4" width="3" height="2"/><rect x="1072.6" y="639.8" width="3" height="2"/><rect x="1080.4" y="642.3" width="3" height="2"/><rect x="1088.2" y="644.9" width="3" height="2"/><rect x="1096.0" y="647.6" width="3" height="2"/><rect x="1103.8" y="650.5" width="3" height="2"/><rect x="1111.6" y="653.5" width="3" height="2"/><rect x="1119.5" y="656.6" width="3" height="2"/><rect x="1127.3" y="659.8" width="3" height="2"/><rect x="1135.1" y="663.1" width="3" height="2"/><rect x="1142.9" y="666.5" width="3" height="2"/><rect x="1150.7" y="670.0" width="3" height="2"/><rect x="1158.5" y="673.5" width="3" height="2"/><rect x="1166.3" y="677.2" width="3" height="2"/><rect x="1174.1" y="681.0" width="3" height="2"/><rect x="1181.9" y="684.8" width="3" height="2"/><rect x="1189.7" y="688.8" width="3" height="2"/><rect x="1197.5" y="692.8" width="3" height="2"/><rect x="1205.4" y="696.8" width="3" height="2"/><rect x="1213.2" y="701.0" width="3" height="2"/><rect x="1221.0" y="705.2" width="3" height="2"/><rect x="1228.8" y="709.5" width="3" height="2"/><rect x="1236.6" y="713.8" width="3" height="2"/><rect x="1244.4" y="718.2" width="3" height="2"/><rect x="1252.2" y="722.6" width="3" height="2"/><rect x="1260.0" y="727.1" width="3" height="2"/><rect x="1267.8" y="731.7" width="3" height="2"/><rect x="1275.7" y="736.2" width="3" height="2"/><rect x="1283.5" y="740.9" width="3" height="2"/><rect x="1291.3" y="745.5" width="3" height="2"/><rect x="1299.1" y="750.2" width="3" height="2"/><rect x="1306.9" y="754.9" width="3" height="2"/><rect x="1314.7" y="759.7" width="3" height="2"/><rect x="1322.5" y="764.4" width="3" height="2"/><rect x="1330.3" y="769.2" width="3" height="2"/><rect x="1338.1" y="774.0" width="3" height="2"/><rect x="1345.9" y="778.8" width="3" height="2"/><rect x="1353.8" y="783.6" width="3" height="2"/><rect x="1361.6" y="788.5" width="3" height="2"/><rect x="1369.4" y="793.3" width="3" height="2"/><rect x="1377.2" y="798.2" width="3" height="2"/><rect x="1385.0" y="803.0" width="3" height="2"/><rect x="1392.8" y="807.9" width="3" height="2"/><rect x="1400.6" y="812.8" width="3" height="2"/><rect x="1408.4" y="817.6" width="3" height="2"/><rect x="1416.2" y="822.5" width="3" height="2"/><rect x="1424.0" y="827.3" width="3" height="2"/><rect x="1431.8" y="832.2" width="3" height="2"/><rect x="1439.7" y="837.0" width="3" height="2"/><rect x="1447.5" y="841.9" width="3" height="2"/><rect x="1455.3" y="846.7" width="3" height="2"/><rect x="1463.1" y="851.5" width="3" height="2"/><rect x="1470.9" y="856.3" width="3" height="2"/><rect x="1478.7" y="861.1" width="3" height="2"/><rect x="1486.5" y="865.8" width="3" height="2"/><rect x="1494.3" y="870.6" width="3" height="2"/><rect x="1502.1" y="875.3" width="3" height="2"/><rect x="1510.0" y="880.0" width="3" height="2"/><rect x="1517.8" y="884.7" width="3" height="2"/><rect x="1525.6" y="889.3" width="3" height="2"/><rect x="1533.4" y="893.9" width="3" height="2"/><rect x="1541.2" y="898.5" width="3" height="2"/><rect x="1549.0" y="903.0" width="3" height="2"/></g>
<path d="M769.5 677.5 L766.5 671.5 L772.5 671.5 Z" fill="none" stroke="#ff0000" stroke-width="1.2"/>
<path d="M1027.5 632.5 L1024.5 626.5 L1030.5 626.5 Z" fill="none" stroke="#00ff00" stroke-width="1.2"/>
<path d="M1284.5 745.5 L1281.5 739.5 L1287.5 739.5 Z" fill="none" stroke="#0000ff" stroke-width="1.2"/>
<path d="M1550.5 908.5 L1547.5 902.5 L1553.5 902.5 Z" fill="none" stroke="#00ffff" stroke-width="1.2"/>
</svg>
<div class="t " style="left:742px;top:516px;">70</div>
<div class="t " style="left:742px;top:583px;">65.0</div>
<div class="t " style="left:742px;top:650px;">60.0</div>
<div class="t " style="left:742px;top:718px;">55.0</div>
<div class="t " style="left:742px;top:786px;">50.0</div>
<div class="t " style="left:742px;top:853px;">45.0</div>
<div class="t " style="left:742px;top:918px;">40</div>
<div class="t " style="left:749px;top:933px;">10.0M</div>
<div class="t " style="left:861px;top:933px;">25.71M</div>
<div class="t " style="left:972px;top:933px;">41.43M</div>
<div class="t " style="left:1084px;top:933px;">57.1M</div>
<div class="t " style="left:1195px;top:933px;">72.9M</div>
<div class="t " style="left:1307px;top:933px;">88.6M</div>
<div class="t " style="left:1418px;top:933px;">104.3M</div>
<div class="t " style="left:1530px;top:933px;">120.0M</div>
</body></html>
